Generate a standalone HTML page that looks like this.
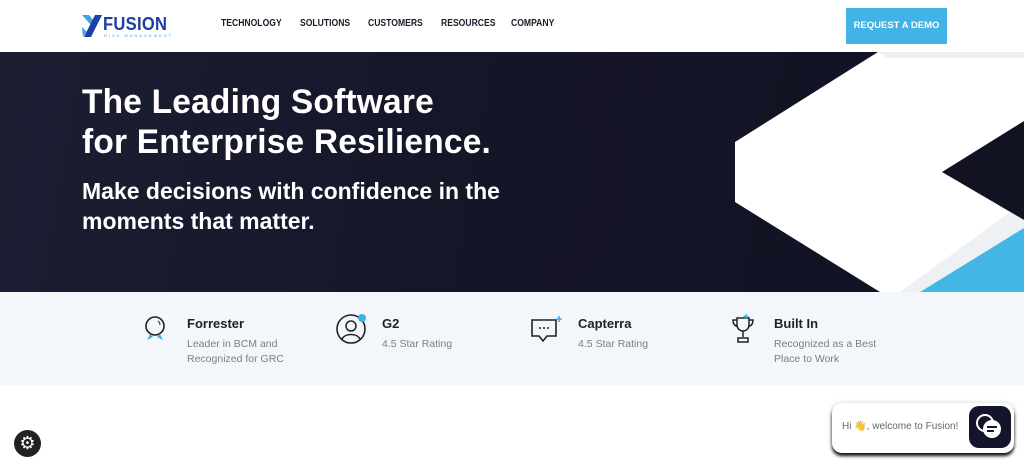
<!DOCTYPE html>
<html><head><style>
*{margin:0;padding:0;box-sizing:border-box}
body{width:1024px;height:467px;overflow:hidden;background:#fff;font-family:"Liberation Sans",sans-serif;position:relative}
.nav{position:absolute;top:18px;font-size:10px;font-weight:bold;color:#1c1c2a;transform:scaleX(.86);transform-origin:left}
.hero{position:absolute;top:52px;left:0;width:1024px;height:240px;background:linear-gradient(100deg,#1d1e33 0%,#141527 50%,#111222 100%);overflow:hidden}
h1{position:absolute;left:82px;top:82px;color:#fff;font-size:34px;line-height:40px;font-weight:bold;letter-spacing:.2px;transform:scaleX(.985);transform-origin:left}
h2{position:absolute;left:82px;top:176px;color:#fff;font-size:23px;line-height:30px;font-weight:bold}
.band{position:absolute;top:292px;left:0;width:1024px;height:93px;background:#f3f6fa}
.it{position:absolute;top:316px}
.it b{display:block;font-size:13px;color:#222;margin-bottom:6px}
.it span{font-size:10.5px;color:#7a7f88;line-height:15px;display:block}
</style></head><body>
<svg style="position:absolute;left:82px;top:15px" width="20" height="22" viewBox="0 0 20 22"><path d="M0 0h7l5 6-3 4z" fill="#3aa7e0"/><path d="M2 22h7l11-22h-7z" fill="#1f3fa8"/><path d="M0 12l5 5-4 5z" fill="#3aa7e0"/></svg>
<div style="position:absolute;left:103px;top:14px;font-size:18px;font-weight:bold;color:#1f3aa4;letter-spacing:.3px;transform:scaleX(.92);transform-origin:left">FUSION</div>
<div style="position:absolute;left:104px;top:33px;font-size:4px;color:#3aa7e0;letter-spacing:2px">RISK MANAGEMENT</div>
<div class="nav" style="left:221px">TECHNOLOGY</div>
<div class="nav" style="left:300px">SOLUTIONS</div>
<div class="nav" style="left:368px">CUSTOMERS</div>
<div class="nav" style="left:441px">RESOURCES</div>
<div class="nav" style="left:511px">COMPANY</div>
<div style="position:absolute;left:846px;top:8px;width:101px;height:36px;background:#41b3e6;color:#fff;font-size:9.5px;font-weight:bold;text-align:center;line-height:36px">REQUEST A DEMO</div>
<div class="hero">
<svg width="1024" height="240" style="position:absolute;left:0;top:0">
<polygon points="878,0 1024,0 1024,69 942,120 1024,168 1024,240 880,240 735,150 735,90" fill="#fff"/>
<polygon points="878,0 1024,0 1024,6 888,6" fill="#eceef2"/>
<polygon points="1010,160 1024,168 1024,176 920,240 900,240" fill="#eef1f4"/>
<polygon points="920,240 1024,176 1024,240" fill="#44b6e6"/>
</svg>
</div>
<h1>The Leading Software<br>for Enterprise Resilience.</h1>
<h2>Make decisions with confidence in the<br>moments that matter.</h2>
<div class="band"></div>
<svg style="position:absolute;left:143px;top:314px" width="26" height="30" viewBox="0 0 26 30"><circle cx="12" cy="12" r="9" fill="none" stroke="#222" stroke-width="1.6"/><path d="M15 7a5 5 0 0 1 2 4" stroke="#222" fill="none"/><path d="M4 26l3-6 3 3zM20 26l-3-6-3 3z" fill="#3fb0e5"/></svg>
<div class="it" style="left:187px"><b>Forrester</b><span>Leader in BCM and<br>Recognized for GRC</span></div>
<svg style="position:absolute;left:335px;top:313px" width="34" height="32" viewBox="0 0 34 32"><circle cx="16" cy="16" r="14" fill="none" stroke="#222" stroke-width="1.6"/><circle cx="16" cy="13" r="5" fill="none" stroke="#222" stroke-width="1.5"/><path d="M7 26c3-6 15-6 18 0" fill="none" stroke="#222" stroke-width="1.5"/><circle cx="27" cy="5" r="4" fill="#3fb0e5"/></svg>
<div class="it" style="left:382px"><b>G2</b><span>4.5 Star Rating</span></div>
<svg style="position:absolute;left:531px;top:316px" width="32" height="28" viewBox="0 0 32 28"><path d="M1 4h24v16H16l-4 5-4-5H1z" fill="none" stroke="#222" stroke-width="1.6"/><circle cx="9" cy="12" r="1" fill="#222"/><circle cx="13" cy="12" r="1" fill="#222"/><circle cx="17" cy="12" r="1" fill="#222"/><path d="M28 0v6M25 3h6" stroke="#3fb0e5" stroke-width="1.6"/></svg>
<div class="it" style="left:578px"><b>Capterra</b><span>4.5 Star Rating</span></div>
<svg style="position:absolute;left:731px;top:314px" width="26" height="30" viewBox="0 0 26 30"><path d="M6 4h12v7a6 6 0 0 1-12 0z M6 6H2c0 4 2 6 4 6M18 6h4c0 4-2 6-4 6M12 17v6M7 24h10v4H7z" fill="none" stroke="#222" stroke-width="1.5"/><path d="M15 0v5M12.5 2.5h5" stroke="#3fb0e5" stroke-width="1.4"/></svg>
<div class="it" style="left:774px"><b>Built In</b><span>Recognized as a Best<br>Place to Work</span></div>
<div style="position:absolute;left:14px;top:430px;width:27px;height:27px;border-radius:50%;background:#222;color:#fff;font-size:18px;text-align:center;line-height:27px">⚙</div>
<div style="position:absolute;left:832px;top:403px;width:182px;height:50px;background:#fff;border-radius:10px;box-shadow:0 3px 3px #111,0 0 6px rgba(0,0,0,.15)"></div>
<div style="position:absolute;left:842px;top:421px;font-size:10px;color:#666">Hi 👋, welcome to Fusion!</div>
<div style="position:absolute;left:969px;top:406px;width:42px;height:42px;border-radius:10px;background:#14152a"></div>
<svg style="position:absolute;left:975px;top:413px" width="30" height="28" viewBox="0 0 30 28"><circle cx="10" cy="10" r="8" fill="none" stroke="#fff" stroke-width="2"/><circle cx="17" cy="16" r="9" fill="#fff"/><path d="M12 14h10M12 18h7" stroke="#14152a" stroke-width="2"/></svg>
</body></html>
